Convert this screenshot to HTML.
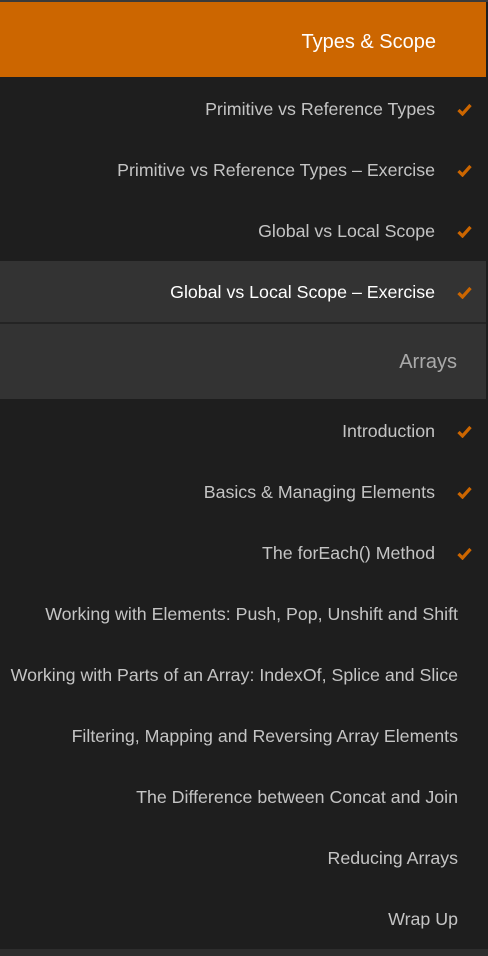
<!DOCTYPE html><html><head><style>
body{margin:0;width:488px;height:956px;background:#1e1e1e;font-family:"Liberation Sans",sans-serif;overflow:hidden;position:relative}
.top{position:absolute;left:0;top:0;width:488px;height:2px;background:#3a3a3a}
.h{position:absolute;left:0;width:486px;text-align:right;box-sizing:border-box;font-size:20px}
.r{position:absolute;left:0;width:486px;height:61px;line-height:63px;text-align:right;box-sizing:border-box;font-size:17.8px;color:#c4c4c4;white-space:nowrap}
.c{padding-right:51px}.n{padding-right:28px}
.r svg{position:absolute;right:14px;top:25px}
</style></head><body>
<div class="top"></div>
<div class="h" style="top:2px;height:75px;line-height:81px;background:#cc6600;color:#fff;padding-right:50px">Types &amp; Scope</div>
<div class="r c" style="top:78px">Primitive vs Reference Types<svg width="15" height="13" viewBox="0 0 15 13"><path d="M1.5 7 L5.5 11 L13.5 2" stroke="#cc6600" stroke-width="3.2" fill="none"/></svg></div>
<div class="r c" style="top:139px">Primitive vs Reference Types – Exercise<svg width="15" height="13" viewBox="0 0 15 13"><path d="M1.5 7 L5.5 11 L13.5 2" stroke="#cc6600" stroke-width="3.2" fill="none"/></svg></div>
<div class="r c" style="top:200px">Global vs Local Scope<svg width="15" height="13" viewBox="0 0 15 13"><path d="M1.5 7 L5.5 11 L13.5 2" stroke="#cc6600" stroke-width="3.2" fill="none"/></svg></div>
<div class="r c" style="top:261px;height:61px;background:#333;color:#fff">Global vs Local Scope – Exercise<svg width="15" height="13" viewBox="0 0 15 13"><path d="M1.5 7 L5.5 11 L13.5 2" stroke="#cc6600" stroke-width="3.2" fill="none"/></svg></div>
<div style="position:absolute;top:322px;left:0;width:486px;height:2px;background:#242424"></div>
<div class="h" style="top:324px;height:75px;line-height:77px;background:#333;color:#aaa;padding-right:29px">Arrays</div>
<div class="r c" style="top:400px">Introduction<svg width="15" height="13" viewBox="0 0 15 13"><path d="M1.5 7 L5.5 11 L13.5 2" stroke="#cc6600" stroke-width="3.2" fill="none"/></svg></div>
<div class="r c" style="top:461px">Basics &amp; Managing Elements<svg width="15" height="13" viewBox="0 0 15 13"><path d="M1.5 7 L5.5 11 L13.5 2" stroke="#cc6600" stroke-width="3.2" fill="none"/></svg></div>
<div class="r c" style="top:522px">The forEach() Method<svg width="15" height="13" viewBox="0 0 15 13"><path d="M1.5 7 L5.5 11 L13.5 2" stroke="#cc6600" stroke-width="3.2" fill="none"/></svg></div>
<div class="r n" style="top:583px">Working with Elements: Push, Pop, Unshift and Shift</div>
<div class="r n" style="top:644px">Working with Parts of an Array: IndexOf, Splice and Slice</div>
<div class="r n" style="top:705px">Filtering, Mapping and Reversing Array Elements</div>
<div class="r n" style="top:766px">The Difference between Concat and Join</div>
<div class="r n" style="top:827px">Reducing Arrays</div>
<div class="r n" style="top:888px">Wrap Up</div>
<div style="position:absolute;top:949px;left:0;width:488px;height:7px;background:#2d2d2d"></div>
</body></html>
